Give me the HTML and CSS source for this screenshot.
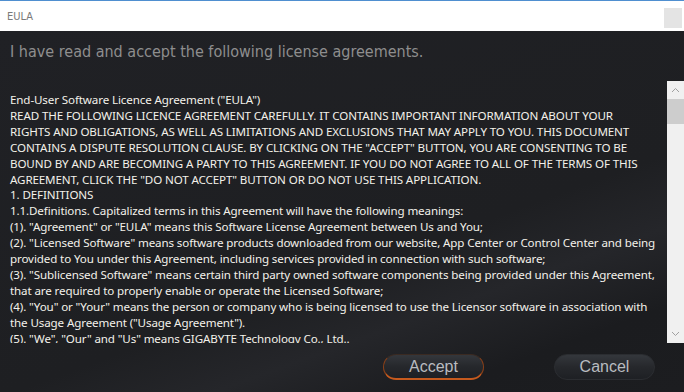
FILE: index.html
```html
<!DOCTYPE html>
<html lang="en">

<head>
    <meta charset="UTF-8">
    <meta name="viewport" content="width=device-width, initial-scale=1">
    <title>EULA</title>
    <link rel="stylesheet" href="styles.css">
</head>

<body>
    <div class="window">
        <header class="title-bar">
            <span class="title">EULA</span>
            <button type="button" class="close-button" aria-label="Close"></button>
        </header>
        <main class="content">
            <h1 class="heading">I have read and accept the following license agreements.</h1>
            <div class="license">
                <div class="license-text">
                    <div class="line">End-User Software Licence Agreement ("EULA")</div>
                    <div class="line">READ THE FOLLOWING LICENCE AGREEMENT CAREFULLY. IT CONTAINS IMPORTANT INFORMATION ABOUT YOUR</div>
                    <div class="line">RIGHTS AND OBLIGATIONS, AS WELL AS LIMITATIONS AND EXCLUSIONS THAT MAY APPLY TO YOU. THIS DOCUMENT</div>
                    <div class="line">CONTAINS A DISPUTE RESOLUTION CLAUSE. BY CLICKING ON THE "ACCEPT" BUTTON, YOU ARE CONSENTING TO BE</div>
                    <div class="line">BOUND BY AND ARE BECOMING A PARTY TO THIS AGREEMENT. IF YOU DO NOT AGREE TO ALL OF THE TERMS OF THIS</div>
                    <div class="line">AGREEMENT, CLICK THE "DO NOT ACCEPT" BUTTON OR DO NOT USE THIS APPLICATION.</div>
                    <div class="line">1. DEFINITIONS</div>
                    <div class="line">1.1.Definitions. Capitalized terms in this Agreement will have the following meanings:</div>
                    <div class="line">(1). "Agreement" or "EULA" means this Software License Agreement between Us and You;</div>
                    <div class="line">(2). "Licensed Software" means software products downloaded from our website, App Center or Control Center and being</div>
                    <div class="line">provided to You under this Agreement, including services provided in connection with such software;</div>
                    <div class="line">(3). "Sublicensed Software" means certain third party owned software components being provided under this Agreement,</div>
                    <div class="line">that are required to properly enable or operate the Licensed Software;</div>
                    <div class="line">(4). "You" or "Your" means the person or company who is being licensed to use the Licensor software in association with</div>
                    <div class="line">the Usage Agreement ("Usage Agreement").</div>
                    <div class="line">(5). "We", "Our" and "Us" means GIGABYTE Technology Co., Ltd..</div>
                </div>
                <div class="scrollbar">
                    <svg class="arrow" width="9" height="6" viewBox="0 0 9 6"><path d="M1 5 L4.5 1.5 L8 5" fill="none" stroke="#a0a0a0" stroke-width="1"/></svg>
                    <div class="thumb"></div>
                    <div class="track"></div>
                    <svg class="arrow" width="9" height="6" viewBox="0 0 9 6"><path d="M1 1 L4.5 4.5 L8 1" fill="none" stroke="#a0a0a0" stroke-width="1"/></svg>
                </div>
            </div>
            <div class="actions">
                <button type="button" class="pill-button accept">Accept</button>
                <button type="button" class="pill-button">Cancel</button>
            </div>
        </main>
    </div>
</body>

</html>
```

FILE: styles.css
```css
:root {
    --title-bg: #ffffff;
    --title-text: #7a7a7a;
    --dark-bg: #1f2023;
    --heading-text: #8e8e8e;
    --body-text: #f3f1ea;
    --scroll-bg: #f0f0f0;
    --scroll-thumb: #cdcdcd;
    --accent: #c65a1e;
    --button-text: #b9bcc0;
}

html,
body {
    width: 100%;
    height: 100%;
    margin: 0;
    padding: 0;
    overflow: hidden;
    background-color: var(--dark-bg);
}

.window {
    display: flex;
    flex-direction: column;
    height: 100%;
}

.title-bar {
    height: 30px;
    display: flex;
    align-items: center;
    justify-content: space-between;
    background-color: var(--title-bg);
    border-top: 1px solid #4f8fd0;
    padding: 0 2px 0 7px;
}

.title {
    font-family: "DejaVu Sans Condensed", "DejaVu Sans", sans-serif;
    font-size: 11px;
    color: var(--title-text);
}

.close-button {
    width: 18px;
    height: 20px;
    margin-top: 4px;
    border: none;
    padding: 0;
    background-color: #e4e4e4;
}

.content {
    flex: 1;
    display: flex;
    flex-direction: column;
    background: linear-gradient(160deg, #202125 0%, #1e1f22 60%, #25262a 72%, #1b1c1f 85%, #1c1d20 100%);
}

.heading {
    margin: 0;
    padding: 11px 10px 0;
    height: 40px;
    box-sizing: border-box;
    font-family: "DejaVu Sans Condensed", "DejaVu Sans", sans-serif;
    font-weight: normal;
    font-size: 16px;
    color: var(--heading-text);
}

.license {
    display: flex;
    height: 262px;
    margin-top: 10px;
}

.license-text {
    flex: 1;
    overflow: hidden;
    padding: 11px 0 0 10px;
    font-family: "Noto Sans", "Open Sans", sans-serif;
    font-size: 11.6px;
    letter-spacing: -0.12px;
    line-height: 15.9px;
    color: var(--body-text);
}

.line {
    white-space: nowrap;
}

.scrollbar {
    width: 17px;
    display: flex;
    flex-direction: column;
    align-items: center;
    background-color: var(--scroll-bg);
}

.arrow {
    flex: none;
    margin: 6px 0;
}

.thumb {
    width: 100%;
    height: 25px;
    background-color: var(--scroll-thumb);
}

.track {
    flex: 1;
}

.actions {
    display: flex;
    justify-content: flex-end;
    gap: 70px;
    padding: 11px 29px 0 0;
}

.pill-button {
    width: 101px;
    height: 26px;
    border-radius: 13px;
    border: 1px solid #2b2d31;
    background: linear-gradient(180deg, #34373c 0%, #26282c 50%, #1e2024 100%);
    font-family: "Liberation Sans", Arial, sans-serif;
    font-size: 16px;
    color: var(--button-text);
    padding: 0;
}

.pill-button.accept {
    border-color: #3a2a22;
    border-bottom: 2px solid var(--accent);
    border-left: 1px solid #8a4018;
    border-right: 1px solid #8a4018;
}
```
